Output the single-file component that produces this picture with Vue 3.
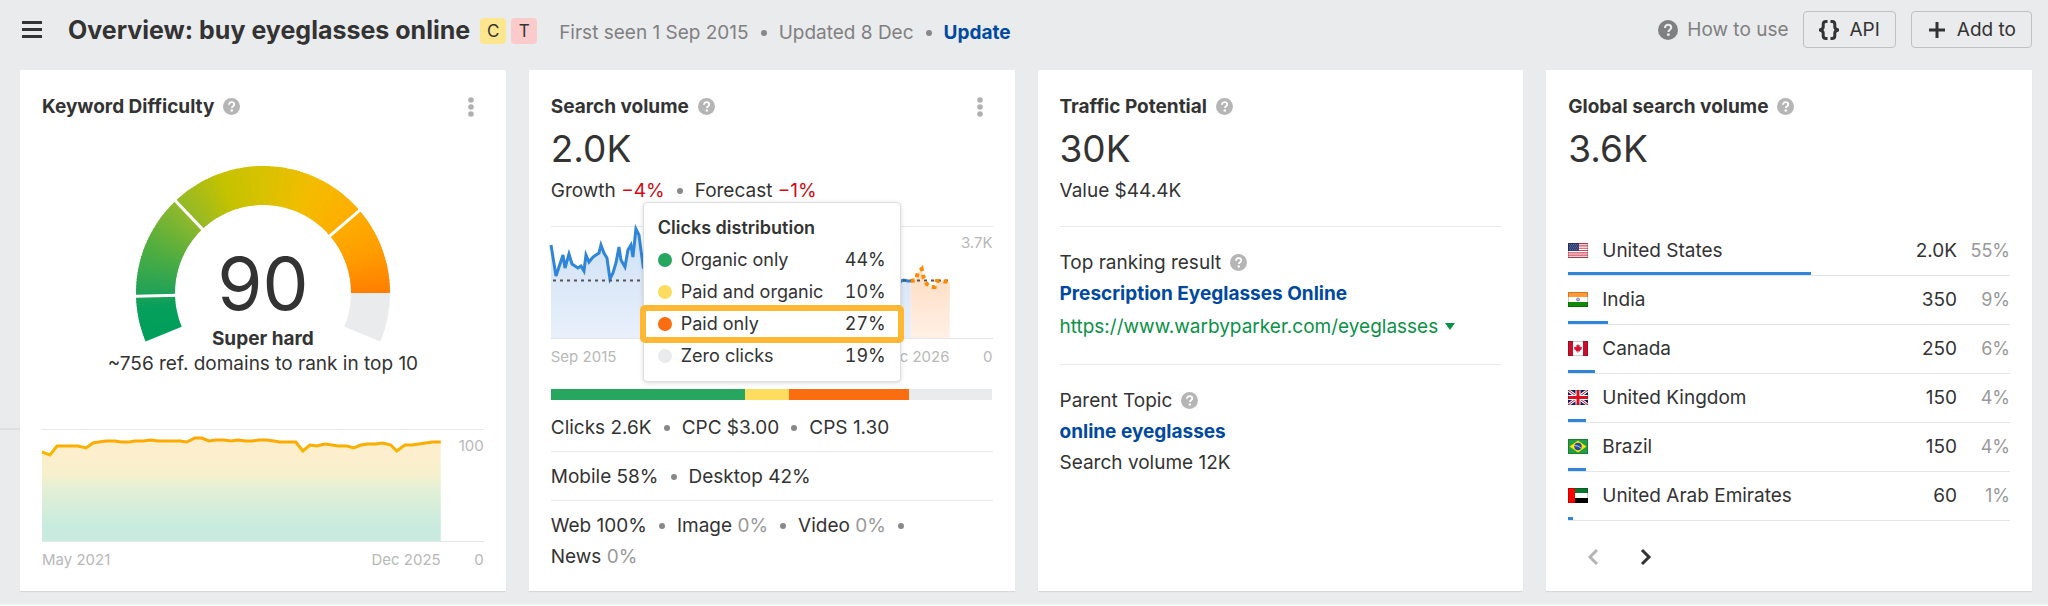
<script setup>
import { computed } from 'vue'

const difficulty = 90

const START_ANGLE = 157.5
const SWEEP = 225
const RADIUS = 107.5
const STEP = 1.5

const gaugeStops = [
  [0, [0, 159, 91]],
  [14, [6, 159, 91]],
  [24, [38, 163, 86]],
  [45, [84, 174, 62]],
  [67, [143, 184, 44]],
  [92, [197, 194, 0]],
  [112, [216, 194, 0]],
  [136, [243, 188, 0]],
  [157, [253, 176, 0]],
  [180, [255, 158, 0]],
  [203, [255, 125, 0]]
]

function point(deg, r) {
  const a = (deg * Math.PI) / 180
  return `${(127 + r * Math.cos(a)).toFixed(2)} ${(127 - r * Math.sin(a)).toFixed(2)}`
}

// angles are measured clockwise from the left end of the gauge
function arc(from, to) {
  const a = START_ANGLE + 45 - from
  const b = START_ANGLE + 45 - to
  return `M${point(a, RADIUS)}A${RADIUS} ${RADIUS} 0 0 1 ${point(b, RADIUS)}`
}

function colorAt(deg) {
  const i = Math.max(1, gaugeStops.findIndex(s => s[0] >= deg))
  const [d0, c0] = gaugeStops[i - 1]
  const [d1, c1] = gaugeStops[i]
  const t = (deg - d0) / (d1 - d0)
  return `rgb(${c0.map((v, k) => Math.round(v + (c1[k] - v) * t)).join(',')})`
}

const filled = computed(() => (SWEEP * difficulty) / 100)

const gaugeArcs = computed(() => {
  const list = []
  for (let d = 0; d < filled.value; d += STEP) {
    list.push({ d: arc(d, Math.min(d + STEP + 0.5, filled.value)), color: colorAt(d) })
  }
  return list
})

const ticks = [21, 69, 162].map(deg => {
  const a = START_ANGLE + 45 - deg
  return `M${point(a, 86)}L${point(a, 129)}`
})

const difficultyLine = '0,22 8,25 15,16 36,16 44,18 51,13 57,12 64,11 73,11 79,12 87,12 93,11 101,11 109,10 116,11 138,11 145,12 153,8 160,8 167,11 174,10 182,10 189,11 196,10 204,11 210,11 217,10 225,10 232,11 238,12 254,12 261,21 268,15 275,16 283,14 297,16 305,16 312,18 319,15 326,14 334,14 341,13 349,15 355,21 363,15 370,15 377,14 391,12 399,12'

const volumeLine = '0,18 5,49 12,28 14,41 18,27 21,37 27,41 30,39 33,44 35,28 38,35 42,30 48,26 50,18 53,26 56,31 59,52 62,46 65,36 68,20 70,33 74,40 77,23 80,18 82,30 85,2 88,8 92,38 100,24 120,34 150,45 200,50 260,52 320,55 347,60 350,54 353,53 357,54 360,54'
const forecastLine = '360,54 365,53 367,46 371,42 373,51 376,57 380,60 384,60 386,54 391,54 399,55'

const clicks = [
  { label: 'Organic only', value: 44, color: '#26a65f' },
  { label: 'Paid and organic', value: 10, color: '#fddc5f' },
  { label: 'Paid only', value: 27, color: '#fa6d10', active: true },
  { label: 'Zero clicks', value: 19, color: '#eaebed' }
]

const countries = [
  { code: 'us', name: 'United States', volume: '2.0K', share: 55 },
  { code: 'in', name: 'India', volume: '350', share: 9 },
  { code: 'ca', name: 'Canada', volume: '250', share: 6 },
  { code: 'gb', name: 'United Kingdom', volume: '150', share: 4 },
  { code: 'br', name: 'Brazil', volume: '150', share: 4 },
  { code: 'ae', name: 'United Arab Emirates', volume: '60', share: 1 }
]
</script>

<template>
  <svg class="sprite" width="0" height="0" aria-hidden="true">
    <symbol id="help" viewBox="0 0 18 18">
      <circle cx="9" cy="9" r="9" fill="currentColor" />
      <path d="M6.3 7.1C6.3 5.4 7.4 4.3 9.1 4.3s2.8 1 2.8 2.5c0 2-2.5 2-2.5 3.9" fill="none" stroke="var(--mark)" stroke-width="1.9" />
      <circle cx="9.3" cy="13.2" r="1.3" fill="var(--mark)" />
    </symbol>
  </svg>

  <div class="page">
    <header class="header">
      <button class="icon-btn" aria-label="Menu">
        <svg width="20" height="17" viewBox="0 0 20 17"><path d="M0 1.5h20M0 8.5h20M0 15.5h20" stroke="#333" stroke-width="3" /></svg>
      </button>
      <div class="heading">
        <h1>Overview: buy eyeglasses online</h1>
        <span class="tags">
          <span class="tag tag-c">C</span>
          <span class="tag tag-t">T</span>
        </span>
        <p class="meta">
          <span>First seen 1 Sep 2015</span>
          <span>Updated 8 Dec</span>
          <a href="#">Update</a>
        </p>
      </div>
      <a class="how" href="#">
        <svg width="20" height="20"><use href="#help" /></svg>
        How to use
      </a>
      <button class="btn">
        <svg width="20" height="20" viewBox="0 0 20 20" fill="none" stroke="#333" stroke-width="3">
          <path d="M8.5 1.5H7Q4.2 1.5 4.2 4.3V7Q4.2 9 1 10Q4.2 11 4.2 13V15.7Q4.2 18.5 7 18.5H8.5M11.5 1.5H13Q15.8 1.5 15.8 4.3V7Q15.8 9 19 10Q15.8 11 15.8 13V15.7Q15.8 18.5 13 18.5H11.5" />
        </svg>
        API
      </button>
      <button class="btn">
        <svg width="20" height="18" viewBox="0 0 20 18"><path d="M10 1v16M2 9h16" stroke="#333" stroke-width="3" /></svg>
        Add to
      </button>
    </header>

    <main class="cards">
      <section class="card">
        <div class="card-head">
          <h2>Keyword Difficulty</h2>
          <svg class="help" width="17" height="17"><use href="#help" /></svg>
          <button class="icon-btn more" aria-label="More">
            <svg width="6" height="20" viewBox="0 0 6 20" fill="#b0b0b0"><circle cx="3" cy="3" r="2.8" /><circle cx="3" cy="10" r="2.8" /><circle cx="3" cy="17" r="2.8" /></svg>
          </button>
        </div>
        <div class="gauge">
          <svg width="254" height="177" viewBox="0 0 254 177" fill="none" stroke-width="39">
            <path v-for="(a, i) in gaugeArcs" :key="i" :d="a.d" :stroke="a.color" />
            <path :d="arc(filled, SWEEP)" stroke="#eaebed" />
            <path v-for="t in ticks" :key="t" :d="t" stroke="#fff" stroke-width="3" />
          </svg>
          <div class="gauge-text">
            <span class="score">{{ difficulty }}</span>
            <strong>Super hard</strong>
            <span>~756 ref. domains to rank in top 10</span>
          </div>
        </div>
        <div class="chart chart-bottom">
          <div class="plot">
            <svg viewBox="0 0 399 111" preserveAspectRatio="none">
              <defs>
                <linearGradient id="kd-fill" x1="0" y1="0" x2="0" y2="1">
                  <stop offset="0.15" stop-color="#fdeecd" />
                  <stop offset="0.35" stop-color="#f7f0cd" />
                  <stop offset="0.5" stop-color="#e2f0d5" />
                  <stop offset="0.85" stop-color="#c9ebdf" />
                </linearGradient>
                <linearGradient id="kd-line" gradientUnits="userSpaceOnUse" x1="0" y1="8" x2="0" y2="26">
                  <stop offset="0" stop-color="#ffa700" />
                  <stop offset="1" stop-color="#f3bb00" />
                </linearGradient>
              </defs>
              <polygon :points="`0,111 ${difficultyLine} 399,111`" fill="url(#kd-fill)" />
              <polyline :points="difficultyLine" fill="none" stroke="url(#kd-line)" stroke-width="3" vector-effect="non-scaling-stroke" />
            </svg>
            <span class="peak">100</span>
          </div>
          <div class="axis"><span>May 2021</span><span>Dec 2025</span><span>0</span></div>
        </div>
      </section>

      <section class="card">
        <div class="card-head">
          <h2>Search volume</h2>
          <svg class="help" width="17" height="17"><use href="#help" /></svg>
          <button class="icon-btn more" aria-label="More">
            <svg width="6" height="20" viewBox="0 0 6 20" fill="#b0b0b0"><circle cx="3" cy="3" r="2.8" /><circle cx="3" cy="10" r="2.8" /><circle cx="3" cy="17" r="2.8" /></svg>
          </button>
        </div>
        <p class="big">2.0K</p>
        <p class="dots">
          <span>Growth <span class="down">−4%</span></span>
          <span>Forecast <span class="down">−1%</span></span>
        </p>
        <div class="chart chart-volume">
          <div class="plot">
            <svg viewBox="0 0 399 111" preserveAspectRatio="none">
              <defs>
                <linearGradient id="sv-fill" x1="0" y1="0" x2="0" y2="1">
                  <stop offset="0" stop-color="#cde0f5" />
                  <stop offset="1" stop-color="#e9f0fb" />
                </linearGradient>
                <linearGradient id="fc-fill" x1="0" y1="0" x2="0" y2="1">
                  <stop offset="0" stop-color="#ffdcc0" />
                  <stop offset="1" stop-color="#fff0e6" />
                </linearGradient>
              </defs>
              <polygon :points="`0,111 ${volumeLine} 360,111`" fill="url(#sv-fill)" />
              <polygon :points="`360,111 ${forecastLine} 399,111`" fill="url(#fc-fill)" />
              <polyline :points="volumeLine" fill="none" stroke="#2f86d8" stroke-width="3" vector-effect="non-scaling-stroke" />
              <path d="M2 53.5H399" stroke="#555" stroke-width="2" stroke-dasharray="3 4" vector-effect="non-scaling-stroke" />
              <polyline :points="forecastLine" fill="none" stroke="#ff8a00" stroke-width="4" stroke-dasharray="4 4" vector-effect="non-scaling-stroke" />
            </svg>
            <span class="peak">3.7K</span>
          </div>
          <div class="axis"><span>Sep 2015</span><span>Dec 2026</span><span>0</span></div>
          <div class="tooltip">
            <strong>Clicks distribution</strong>
            <ul>
              <li v-for="c in clicks" :key="c.label" :class="{ active: c.active }">
                <i :style="{ background: c.color }"></i>
                <span>{{ c.label }}</span>
                <b>{{ c.value }}%</b>
              </li>
            </ul>
          </div>
        </div>
        <div class="stack">
          <i v-for="c in clicks" :key="c.label" :style="{ width: c.value + '%', background: c.color }"></i>
        </div>
        <div class="facts">
          <p class="dots"><span>Clicks 2.6K</span><span>CPC $3.00</span><span>CPS 1.30</span></p>
          <p class="dots"><span>Mobile 58%</span><span>Desktop 42%</span></p>
          <p class="dots">
            <span>Web 100%</span>
            <span>Image <span class="muted">0%</span></span>
            <span>Video <span class="muted">0%</span></span>
            <span>News <span class="muted">0%</span></span>
          </p>
        </div>
      </section>

      <section class="card">
        <div class="card-head">
          <h2>Traffic Potential</h2>
          <svg class="help" width="17" height="17"><use href="#help" /></svg>
        </div>
        <p class="big">30K</p>
        <p>Value $44.4K</p>
        <div class="block">
          <p class="with-help">Top ranking result <svg class="help" width="17" height="17"><use href="#help" /></svg></p>
          <p><a class="link" href="#">Prescription Eyeglasses Online</a></p>
          <p class="url">
            <a href="#">https://www.warbyparker.com/eyeglasses</a>
            <button class="icon-btn" aria-label="URL options">
              <svg width="10" height="7" viewBox="0 0 10 7"><path d="M0 0h10L5 7z" fill="#0a9148" /></svg>
            </button>
          </p>
        </div>
        <div class="block">
          <p class="with-help">Parent Topic <svg class="help" width="17" height="17"><use href="#help" /></svg></p>
          <p><a class="link" href="#">online eyeglasses</a></p>
          <p>Search volume 12K</p>
        </div>
      </section>

      <section class="card">
        <div class="card-head">
          <h2>Global search volume</h2>
          <svg class="help" width="17" height="17"><use href="#help" /></svg>
        </div>
        <p class="big">3.6K</p>
        <table class="countries">
          <tbody>
            <tr v-for="c in countries" :key="c.code">
              <td class="flag">
                <svg width="20" height="15" viewBox="0 0 20 15">
                  <g v-if="c.code === 'us'">
                    <path fill="#fff" d="M0 0h20v15H0z" />
                    <path stroke="#cf4a5a" stroke-width="1.15" d="M0 .6h20M0 2.9h20M0 5.2h20M0 7.5h20M0 9.8h20M0 12.1h20M0 14.4h20" />
                    <path fill="#2b3a70" d="M0 0h11v8H0z" />
                    <path stroke="#8d97ba" stroke-width=".8" stroke-dasharray=".8 1.2" d="M1 1.5h9.5M2 3.2h8.5M1 4.9h9.5M2 6.6h8.5" />
                  </g>
                  <g v-else-if="c.code === 'in'">
                    <path fill="#fff" d="M0 0h20v15H0z" />
                    <path fill="#ff9933" d="M0 0h20v5H0z" />
                    <path fill="#128807" d="M0 10h20v5H0z" />
                    <circle cx="10" cy="7.5" r="1.5" fill="#b5b5e5" stroke="#6767c0" stroke-width=".7" />
                  </g>
                  <g v-else-if="c.code === 'ca'">
                    <path fill="#fff" d="M0 0h20v15H0z" />
                    <path fill="#c8102e" d="M0 0h5v15H0zM15 0h5v15h-5z" />
                    <path fill="#d80f2f" d="M10 3l.9 1.5.9-.4-.3 2.2 1-.8.3.7 1.2-.1-.5 1.3.5.5-2.2 1.7.2.8-1.7-.2v1.8h-.6v-1.8l-1.7.2.2-.8L6 7.9l.5-.5L6 6.1l1.2.1.3-.7 1 .8-.3-2.2.9.4z" />
                  </g>
                  <g v-else-if="c.code === 'gb'">
                    <path fill="#131e71" d="M0 0h20v15H0z" />
                    <path stroke="#fff" stroke-width="3" d="M0 0l20 15M20 0L0 15" />
                    <path stroke="#d8101f" stroke-width="1" d="M0 0l20 15M20 0L0 15" />
                    <path stroke="#fff" stroke-width="5" d="M10 0v15M0 7.5h20" />
                    <path stroke="#d8101f" stroke-width="3" d="M10 0v15M0 7.5h20" />
                  </g>
                  <g v-else-if="c.code === 'br'">
                    <path fill="#229e45" d="M0 0h20v15H0z" />
                    <path fill="#f8e509" d="M10 1.5l8.5 6L10 13.5l-8.5-6z" />
                    <circle cx="10" cy="7.5" r="3.7" fill="#2b49a3" />
                    <path d="M6.6 6.6q3.7-.3 6.4 2.5" fill="none" stroke="#e4ecf5" stroke-width=".8" />
                  </g>
                  <g v-else>
                    <path fill="#fff" d="M0 0h20v15H0z" />
                    <path fill="#0a7330" d="M0 0h20v5H0z" />
                    <path fill="#000" d="M0 10h20v5H0z" />
                    <path fill="#f00" d="M0 0h7v15H0z" />
                  </g>
                  <rect x=".5" y=".5" width="19" height="14" fill="none" stroke="#000" stroke-opacity=".2" />
                </svg>
                <i class="share-bar" :style="{ width: c.share + '%' }"></i>
              </td>
              <td>{{ c.name }}</td>
              <td class="num">{{ c.volume }}</td>
              <td class="num pct">{{ c.share }}%</td>
            </tr>
          </tbody>
        </table>
        <nav class="pager">
          <button class="icon-btn" aria-label="Previous" disabled>
            <svg width="12" height="18" viewBox="0 0 12 18"><path d="M10 2L3 9l7 7" fill="none" stroke="#b5b5b5" stroke-width="3" /></svg>
          </button>
          <button class="icon-btn" aria-label="Next">
            <svg width="12" height="18" viewBox="0 0 12 18"><path d="M2 2l7 7-7 7" fill="none" stroke="#333" stroke-width="3" /></svg>
          </button>
        </nav>
      </section>
    </main>
  </div>
</template>

<style>
body {
  background: #f7f7f8;
}
</style>

<style scoped>
.page {
  position: relative;
  background: #eaebed;
  color: #333;
  font-family: Inter, "Liberation Sans", sans-serif;
  font-size: 19px;
  line-height: 31px;
  padding: 11px 16px 13px 20px;
}

/* divider that shows in the page gutter */
.page::before {
  content: '';
  position: absolute;
  left: 0;
  top: 428px;
  width: 20px;
  height: 2px;
  background: #dedfdf;
}

.sprite {
  position: absolute;
}

svg {
  display: block;
  flex: none;
}

h1,
h2,
p,
ul {
  margin: 0;
  padding: 0;
}

a {
  color: inherit;
  text-decoration: none;
}

.icon-btn {
  background: none;
  border: none;
  padding: 0;
  cursor: pointer;
}

.header {
  display: flex;
  align-items: center;
  gap: 15px;
  height: 37px;
  padding-left: 2px;
  margin-bottom: 22px;
}

.heading {
  display: flex;
  align-items: center;
  flex: 1;
  margin-left: 11px;
  padding-top: 2px;
}

h1 {
  font-size: 25px;
  font-weight: 700;
}

.tags {
  display: flex;
  gap: 5px;
  margin-left: 10px;
}

.tag {
  width: 26px;
  height: 26px;
  line-height: 26px;
  font-size: 17px;
  text-align: center;
  border-radius: 4px;
}

.tag-c {
  background: #fde68e;
}

.tag-t {
  background: #fbcaca;
}

.meta {
  color: #808080;
  margin-left: 22px;
  padding-top: 4px;
}

.meta span::after,
.dots > span:not(:last-child)::after {
  content: '';
  display: inline-block;
  width: 6px;
  height: 6px;
  border-radius: 50%;
  background: #888;
  margin: 0 12px;
  vertical-align: 3px;
}

.meta a {
  color: #0049a0;
  font-weight: 700;
}

.how {
  display: flex;
  align-items: center;
  gap: 9px;
  color: #808080;
  --mark: #eaebed;
}

.btn {
  display: flex;
  align-items: center;
  gap: 10px;
  height: 37px;
  padding: 0 15px;
  border: 1px solid #bfc0c2;
  border-radius: 4px;
  background: none;
  font: inherit;
  color: inherit;
  cursor: pointer;
}

.cards {
  display: grid;
  grid-template-columns: repeat(4, minmax(0, 1fr));
  gap: 23px;
}

.card {
  display: flex;
  flex-direction: column;
  background: #fff;
  padding: 21px 22px 19px;
  box-shadow: 0 1px 1px rgba(0, 0, 0, 0.08);
}

.card-head,
.with-help {
  display: flex;
  align-items: center;
  gap: 9px;
}

h2 {
  font-size: 19px;
  font-weight: 700;
}

.help {
  color: #b5b5b5;
  --mark: #fff;
}

.more {
  margin-left: auto;
  padding: 0 10px;
}

.big {
  font-size: 37px;
  line-height: 53px;
}

.down {
  color: #cf0a14;
}

.muted {
  color: #999;
}

.gauge {
  display: grid;
  justify-items: center;
  margin-top: 44px;
}

.gauge > * {
  grid-area: 1 / 1;
}

.gauge-text {
  display: flex;
  flex-direction: column;
  align-items: center;
  line-height: 25px;
  padding-top: 76px;
}

.gauge-text strong {
  font-weight: 700;
}

.score {
  font-size: 73px;
  line-height: 84px;
}

.chart-bottom {
  margin-top: auto;
}

.chart-volume {
  position: relative;
  margin-top: 20px;
}

.plot,
.axis {
  display: grid;
  grid-template-columns: minmax(0, 1fr) 43px;
}

.plot {
  border-top: 1px solid #e8e8e8;
  border-bottom: 1px solid #e3e5e8;
}

.plot svg {
  width: 100%;
  height: 111px;
  overflow: visible;
}

.peak,
.axis {
  color: #b8b8b8;
  font-size: 15px;
  line-height: 24px;
}

.peak {
  text-align: right;
  padding-top: 4px;
}

.axis {
  grid-template-columns: 1fr 1fr 43px;
  margin-top: 6px;
}

.axis span:not(:first-child) {
  text-align: right;
}

.tooltip {
  position: absolute;
  left: 92px;
  top: -24px;
  width: 258px;
  box-sizing: border-box;
  padding: 9px 14px;
  background: #fff;
  border: 1px solid #dedede;
  border-radius: 4px;
  box-shadow: 0 1px 4px rgba(0, 0, 0, 0.15);
  font-size: 18px;
  line-height: 32px;
}

.tooltip strong {
  font-weight: 600;
}

.tooltip li {
  position: relative;
  display: flex;
  align-items: center;
  gap: 9px;
}

.tooltip i {
  width: 14px;
  height: 14px;
  border-radius: 50%;
}

.tooltip b {
  margin-left: auto;
  font-weight: 400;
  font-variant-numeric: tabular-nums;
}

.tooltip .active::after {
  content: '';
  position: absolute;
  inset: -3px -18px;
  border: 6px solid #ffb833;
  border-radius: 5px;
}

.stack {
  display: flex;
  height: 11px;
  margin-top: 20px;
}

.facts {
  padding-top: 3px;
}

.facts p {
  padding: 9px 0 8px;
}

.facts p:last-child {
  padding-bottom: 0;
}

.facts p + p {
  border-top: 1px solid #e8e8e8;
}

.dots > span {
  display: inline-block;
}

.block {
  border-top: 1px solid #e8e8e8;
  margin-top: 20px;
  padding-top: 20px;
}

.link {
  color: #0049a0;
  font-weight: 700;
}

.url {
  display: flex;
  align-items: center;
  gap: 7px;
  padding: 2px 0;
  color: #0a9148;
}

.countries {
  width: 100%;
  border-collapse: collapse;
  margin-top: 52px;
}

.countries tr {
  position: relative;
  border-bottom: 1px solid #e3e4e6;
}

.countries td {
  height: 46px;
  padding: 0 0 2px;
}

.countries .flag {
  width: 34px;
}

.share-bar {
  position: absolute;
  left: 0;
  bottom: 0;
  height: 3px;
  background: #2f86d8;
}

.countries .num {
  text-align: right;
}

.countries .pct {
  width: 53px;
  font-size: 18px;
  color: #999;
}

.pager {
  display: flex;
  gap: 41px;
  padding: 27px 0 0 19px;
}
</style>
